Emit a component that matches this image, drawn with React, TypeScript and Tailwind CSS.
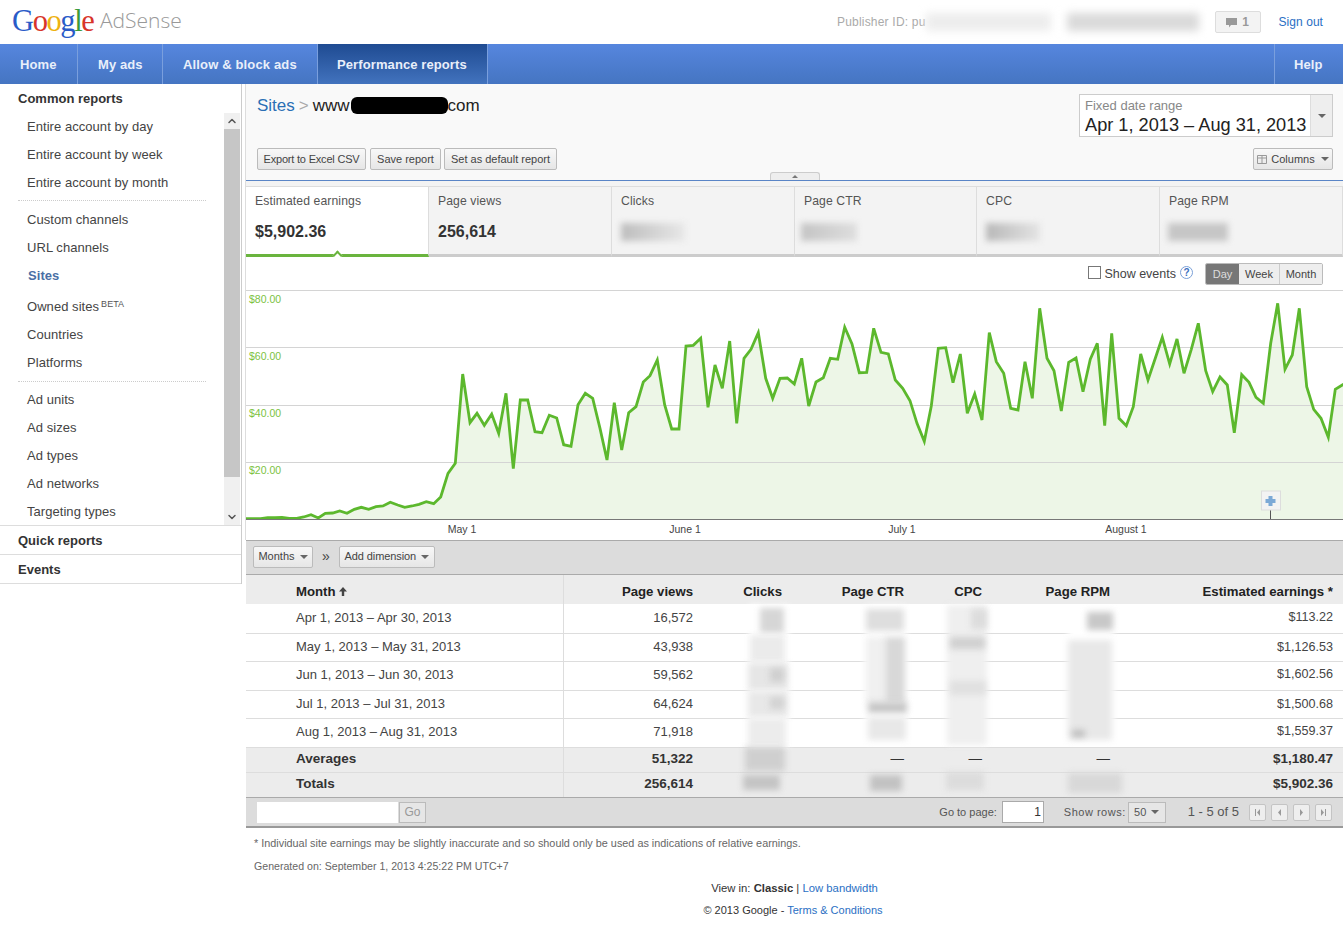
import { ChevronUp, ChevronDown } from "lucide-react";

const zoomA = [[0,716],[22,716],[44,716],[65,713],[87,713],[108,712],[130,715],[152,715],[173,711],[195,704],[217,714],[238,700],[260,699],[281,693],[303,700],[325,688],[346,682],[368,688],[390,680],[411,678],[433,667],[455,675],[476,682],[498,678],[519,673],[541,665],[563,671],[584,651],[606,580],[628,550],[650,282],[672,428],[693,400],[715,436],[737,402],[758,460],[780,340],[802,566],[823,360],[845,360],[867,455],[888,458],[910,406],[932,414],[953,494],[975,499],[996,374],[1018,340],[1040,355],[1062,445],[1083,540],[1105,368],[1127,510],[1148,398],[1170,380]];
const zoomB = [[10,306],[30,287],[52,240],[74,375],[95,447],[117,447],[138,198],[160,196],[182,175],[204,382],[225,255],[247,325],[269,183],[290,430],[312,235],[333,208],[355,158],[377,295],[398,355],[420,295],[442,294],[463,312],[485,235],[506,378],[528,306],[550,293],[571,235],[593,238],[614,142],[636,192],[658,278],[680,277],[701,145],[723,217],[745,222],[766,300],[788,325],[810,362],[831,430],[853,484],[874,378],[895,205],[917,203],[939,308],[961,222],[982,400],[1004,342],[1026,420],[1048,158]];
const zoomC = [[19,245],[41,280],[62,385],[84,390],[105,245],[127,355],[149,85],[171,235],[192,272],[214,393],[236,247],[258,234],[279,335],[301,238],[322,190],[344,437],[365,160],[387,415],[409,437],[430,380],[452,222],[474,300],[496,235],[517,172],[539,252],[561,177],[582,280],[604,208],[625,130],[647,272],[668,335],[690,291],[712,315],[733,458],[755,284],[777,307],[798,352],[820,370],[842,190],[863,70],[885,268],[907,225],[928,85],[950,320],[971,388],[993,415],[1015,472],[1036,328],[1058,314],[1062,312]];

const toPts = (arr: number[][], x0: number) =>
  arr.map(([x, y]) => `${(x0 + x / 3).toFixed(1)},${(280 + y / 3).toFixed(1)}`).join(" ");
const line = `${toPts(zoomA, 246)} ${toPts(zoomB, 640)} ${toPts(zoomC, 990)}`;

const font = "font-['Liberation_Sans',Arial,sans-serif]";

function Caret({ className = "border-t-[#666]" }: { className?: string }) {
  return <span className={`inline-block w-0 h-0 border-x-[4px] border-t-[4px] border-x-transparent ${className}`} />;
}

function Btn({ children, className = "" }: { children: React.ReactNode; className?: string }) {
  return (
    <div className={`h-[22px] flex items-center justify-center rounded-[2px] border border-[#bbb] bg-gradient-to-b from-[#f8f8f8] to-[#e6e6e6] text-[11px] text-[#444] ${className}`}>
      {children}
    </div>
  );
}

function SideItem({ label, active, beta }: { label: string; active?: boolean; beta?: boolean }) {
  return (
    <div className={`h-[28px] flex items-center text-[13px] tracking-[0.05px] ${active ? "font-bold text-[#4a6fa5] pl-[28px]" : "text-[#444] pl-[27px]"}`}>
      {label}
      {beta && <sup className="text-[9px] text-[#555] ml-[2px] top-[-3px]">BETA</sup>}
    </div>
  );
}

function Sidebar() {
  return (
    <div className="w-[242px] shrink-0 border-r border-[#ccc] h-[500px] flex flex-col">
      <div className="h-[29px] flex items-center pl-[18px] text-[13px] font-bold text-[#333]">Common reports</div>
      <div className="h-[412px] flex">
        <div className="flex-1 overflow-hidden">
          <SideItem label="Entire account by day" />
          <SideItem label="Entire account by week" />
          <SideItem label="Entire account by month" />
          <div className="h-[4px] mx-[18px] border-b border-dotted border-[#ccc] mb-[5px]" />
          <SideItem label="Custom channels" />
          <SideItem label="URL channels" />
          <SideItem label="Sites" active />
          <div className="h-[3px]" />
          <SideItem label="Owned sites" beta />
          <SideItem label="Countries" />
          <SideItem label="Platforms" />
          <div className="h-[5px] mx-[18px] border-b border-dotted border-[#ccc] mb-[4px]" />
          <SideItem label="Ad units" />
          <SideItem label="Ad sizes" />
          <SideItem label="Ad types" />
          <SideItem label="Ad networks" />
          <SideItem label="Targeting types" />
        </div>
        <div className="w-[16px] mr-[1px] bg-[#f0f0f0] flex flex-col">
          <div className="h-[16px] flex items-center justify-center"><ChevronUp size={12} strokeWidth={3} className="text-[#555]" /></div>
          <div className="h-[348px] bg-[#c6c6c6]" />
          <div className="flex-1 flex items-end justify-center pb-[2px]"><ChevronDown size={12} strokeWidth={3} className="text-[#555]" /></div>
        </div>
      </div>
      <div className="h-[29px] flex items-center pl-[18px] pt-[1px] text-[13px] font-bold text-[#333] border-t border-[#ddd]">Quick reports</div>
      <div className="h-[30px] flex items-center pl-[18px] pt-[1px] text-[13px] font-bold text-[#333] border-y border-[#ddd]">Events</div>
    </div>
  );
}

function Metric({ label, value, active, blur, width = "w-[183px]" }: { label: string; value?: string; active?: boolean; blur?: string; width?: string }) {
  return (
    <div className={`${width} h-[70px] pl-[9px] pt-[6px] border-r border-[#ddd] relative ${active ? "bg-white border-b-[3px] border-b-[#6ab43e]" : "bg-[#f3f3f3] border-b-[3px] border-b-[#ccc]"}`}>
      <div className="text-[12.2px] tracking-[0.1px] text-[#555] leading-[16px]">{label}</div>
      {value ? (
        <div className="mt-[13px] text-[16px] font-bold text-[#333] leading-[20px]">{value}</div>
      ) : (
        <div className={`mt-[14px] h-[18px] blur-[3px] ${blur}`} />
      )}
      {active && (
        <span className="absolute left-[88px] bottom-[-5px] w-[7px] h-[7px] rotate-45 bg-white border-l-[2px] border-t-[2px] border-[#6ab43e]" />
      )}
    </div>
  );
}

function Chart() {
  const grid = [290.5, 347.5, 405.5, 462.5];
  const labels: [string, number][] = [["$80.00", 302.5], ["$60.00", 359.5], ["$40.00", 416.5], ["$20.00", 473.5]];
  const months: [string, number][] = [["May 1", 462], ["June 1", 685], ["July 1", 902], ["August 1", 1126]];
  return (
    <svg viewBox="246 290 1097 250" className="block w-[1097px] h-[250px]">
      <polygon points={`246,519 ${line} 1343,519`} fill="#edf6e7" />
      {grid.map((y) => (
        <line key={y} x1="246" x2="1343" y1={y} y2={y} stroke="#d4d4d4" />
      ))}
      {labels.map(([t, y]) => (
        <text key={t} x="249" y={y} fontSize="10.5" fill="#7cc242" fontFamily="Liberation Sans">{t}</text>
      ))}
      <polyline points={line} fill="none" stroke="#5cb82d" strokeWidth="2.8" strokeLinejoin="miter" />
      <line x1="246" x2="1343" y1="519.5" y2="519.5" stroke="#777" />
      {months.map(([m, x]) => (
        <text key={m} x={x} y="533" fontSize="10.5" fill="#444" textAnchor="middle" fontFamily="Liberation Sans">{m}</text>
      ))}
      <line x1="1270.5" x2="1270.5" y1="509" y2="519" stroke="#555" />
      <rect x="1261.5" y="491" width="19" height="19" fill="#f3f3f3" stroke="#ddd" />
      <path d="M1268.5 496h4v3h3v4h-3v3h-4v-3h-3v-4h3z" fill="#7ca9d6" />
    </svg>
  );
}

const rows = [
  ["Apr 1, 2013 – Apr 30, 2013", "16,572", "$113.22", "h-[29px] [&>td]:pb-[2px]"],
  ["May 1, 2013 – May 31, 2013", "43,938", "$1,126.53", "h-[28px]"],
  ["Jun 1, 2013 – Jun 30, 2013", "59,562", "$1,602.56", "h-[29px] [&>td]:pb-[2px]"],
  ["Jul 1, 2013 – Jul 31, 2013", "64,624", "$1,500.68", "h-[28px]"],
  ["Aug 1, 2013 – Aug 31, 2013", "71,918", "$1,559.37", "h-[29px] [&>td]:pb-[2px]"],
];

// smudges over the hidden figures, relative to the table's top left
const smudges = [
  // clicks
  "left-[503px] top-[30px] w-[40px] h-[142px] bg-white",
  "left-[514px] top-[33px] w-[24px] h-[25px] bg-[#d6d6d6]",
  "left-[504px] top-[60px] w-[35px] h-[27px] bg-[#ebebeb]",
  "left-[502px] top-[88px] w-[40px] h-[27px] bg-[#e6e6e6]",
  "left-[524px] top-[93px] w-[14px] h-[14px] bg-[#cfcfcf]",
  "left-[502px] top-[116px] w-[40px] h-[26px] bg-[#e8e8e8]",
  "left-[524px] top-[122px] w-[14px] h-[12px] bg-[#d2d2d2]",
  "left-[502px] top-[143px] w-[38px] h-[28px] bg-[#ececec]",
  "left-[499px] top-[172px] w-[40px] h-[24px] bg-[#cfcfcf]",
  "left-[497px] top-[200px] w-[37px] h-[15px] bg-[#c4c4c4]",
  // page ctr
  "left-[619px] top-[31px] w-[42px] h-[136px] bg-white",
  "left-[620px] top-[34px] w-[38px] h-[22px] bg-[#dedede]",
  "left-[620px] top-[62px] w-[20px] h-[66px] bg-[#f0f0f0]",
  "left-[639px] top-[62px] w-[20px] h-[66px] bg-[#d8d8d8]",
  "left-[622px] top-[127px] w-[39px] h-[11px] bg-[#c6c6c6]",
  "left-[622px] top-[142px] w-[38px] h-[23px] bg-[#e8e8e8]",
  "left-[624px] top-[200px] w-[32px] h-[16px] bg-[#c2c2c2]",
  // cpc
  "left-[701px] top-[30px] w-[40px] h-[140px] bg-[#efefef]",
  "left-[725px] top-[34px] w-[16px] h-[20px] bg-[#dcdcdc]",
  "left-[704px] top-[62px] w-[35px] h-[12px] bg-[#d0d0d0]",
  "left-[704px] top-[106px] w-[36px] h-[14px] bg-[#e0e0e0]",
  "left-[700px] top-[197px] w-[38px] h-[18px] bg-[#dcdcdc]",
  // page rpm
  "left-[822px] top-[35px] w-[46px] h-[132px] bg-white",
  "left-[841px] top-[37px] w-[26px] h-[18px] bg-[#c8c8c8]",
  "left-[822px] top-[65px] w-[44px] h-[100px] bg-[#e8e8e8]",
  "left-[826px] top-[155px] w-[13px] h-[7px] bg-[#bcbcbc]",
  "left-[822px] top-[198px] w-[54px] h-[20px] bg-[#d8d8d8]",
];

function DataTable() {
  return (
    <div className="relative">
      <table className="w-[1097px] table-fixed border-collapse text-[13px] text-[#444]">
        <colgroup>
          <col className="w-[317px]" /><col className="w-[140px]" /><col className="w-[89px]" /><col className="w-[122px]" /><col className="w-[78px]" /><col className="w-[128px]" /><col className="w-[223px]" />
        </colgroup>
        <thead>
          <tr className="h-[29px] bg-[#ececec] text-[13.2px] text-[#222] text-right">
            <th className="pl-[50px] pt-[4px] text-left border-r border-[#ddd]">
              <span className="inline-flex items-center gap-[3px]">
                Month
                <svg width="8" height="9" viewBox="0 0 8 9"><path d="M4 0l4 4.500H5.200V9H2.800V4.500H0z" fill="#444" /></svg>
              </span>
            </th>
            <th className="pr-[10px] pt-[4px]">Page views</th>
            <th className="pr-[10px] pt-[4px]">Clicks</th>
            <th className="pr-[10px] pt-[4px]">Page CTR</th>
            <th className="pr-[10px] pt-[4px]">CPC</th>
            <th className="pr-[10px] pt-[4px]">Page RPM</th>
            <th className="pr-[10px] pt-[4px]">Estimated earnings *</th>
          </tr>
        </thead>
        <tbody>
          {rows.map(([m, v, e, h]) => (
            <tr key={m} className={`${h} border-b border-[#ddd] text-right`}>
              <td className="pl-[50px] text-left border-r border-[#ddd]">{m}</td>
              <td className="pr-[10px]">{v}</td>
              <td /><td /><td /><td />
              <td className="pr-[10px] text-[12.6px]">{e}</td>
            </tr>
          ))}
          <tr className="h-[25px] bg-[#ececec] border-b border-[#ddd] text-[13.5px] font-bold text-right text-[#333]">
            <td className="pl-[50px] text-left border-r border-[#ddd]">Averages</td>
            <td className="pr-[10px]">51,322</td>
            <td />
            <td className="pr-[10px] font-normal">—</td>
            <td className="pr-[10px] font-normal">—</td>
            <td className="pr-[10px] font-normal">—</td>
            <td className="pr-[10px]">$1,180.47</td>
          </tr>
          <tr className="h-[25px] bg-[#ececec] text-[13.5px] font-bold text-right text-[#333]">
            <td className="pl-[50px] pb-[1px] text-left border-r border-[#ddd]">Totals</td>
            <td className="pr-[10px] pb-[1px]">256,614</td>
            <td /><td /><td /><td />
            <td className="pr-[10px] pb-[1px]">$5,902.36</td>
          </tr>
        </tbody>
      </table>
      {smudges.map((s) => (
        <div key={s} className={`absolute blur-[3px] ${s}`} />
      ))}
    </div>
  );
}

function PagerBtn({ d }: { d: string }) {
  return (
    <div className="w-[17px] h-[17px] flex items-center justify-center rounded-[2px] border border-[#c4c4c4] bg-[#eee]">
      <svg width="9" height="9" viewBox="0 0 9 9"><path d={d} fill="#999" /></svg>
    </div>
  );
}

export default function App() {
  return (
    <div className={`${font} w-full h-[942px] bg-white overflow-hidden`}>
      <header className="h-[44px] flex items-center">
        <div className="pl-[12px] w-[100px] text-[30.5px] leading-none font-['Liberation_Serif',serif] tracking-[-1.4px] -mt-[2px]">
          <span className="text-[#2a5bc8]">G</span><span className="text-[#d8352a]">o</span><span className="text-[#eeb211]">o</span><span className="text-[#2a5bc8]">g</span><span className="text-[#3b9b3a]">l</span><span className="text-[#d8352a]">e</span>
        </div>
        <div className="text-[21px] font-['Open_Sans',sans-serif] font-light text-[#999] -mt-[3px]">AdSense</div>
        <div className="ml-auto flex items-center text-[12px] text-[#aaa]">
          <span className="tracking-[0.2px]">Publisher ID: pu</span>
          <span className="w-[125px] h-[18px] bg-[#ededed] blur-[4px]" />
          <span className="ml-[16px] w-[132px] h-[18px] bg-[#dadada] blur-[4px]" />
          <div className="ml-[16px] w-[46px] h-[22px] flex items-center justify-center gap-[5px] border border-[#ddd] bg-[#f3f3f3] rounded-[2px] text-[#999] font-bold">
            <svg width="11" height="11" viewBox="0 0 11 11"><path d="M0 1h11v7H5L3 10.500V8H0z" fill="#999" /></svg>1
          </div>
          <span className="ml-[18px] mr-[20px] tracking-[0.05px] text-[#2a6fc4]">Sign out</span>
        </div>
      </header>

      <nav className="h-[40px] flex bg-gradient-to-b from-[#5686de] to-[#4575c2] text-[13px] font-bold tracking-[0.1px] text-[#e9effa]">
        <div className="w-[78px] pl-[20px] pt-[1px] flex items-center border-r border-[#7a9fdd]">Home</div>
        <div className="w-[85px] pl-[20px] pt-[1px] flex items-center border-r border-[#7a9fdd]">My ads</div>
        <div className="w-[154px] pl-[20px] pt-[1px] flex items-center tracking-[0.15px]">Allow &amp; block ads</div>
        <div className="w-[171px] pl-[19px] pt-[1px] flex items-center bg-gradient-to-b from-[#1f4b92] to-[#4273be] border-x border-[#7a9fdd]">Performance reports</div>
        <div className="ml-auto w-[69px] pl-[19px] pt-[1px] flex items-center border-l border-[#7a9fdd]">Help</div>
      </nav>

      <div className="flex">
        <Sidebar />
        <main className="w-[1097px] ml-[4px]">
          <div className="w-[1098px] -ml-[1px] border-l border-[#ddd]">
            <section className="h-[97px] bg-[#f9f9f9] border-b border-[#5a85c6] relative">
              <div className="flex justify-between pl-[11px] pr-[10px] pt-[10px]">
                <div className="text-[17px] leading-[22px] pt-[1px] text-[#222] flex items-center h-[22px]">
                  <span className="text-[#2a6fb5]">Sites</span>
                  <span className="text-[#aaa] mx-[4px]">&gt;</span>
                  <span>www</span>
                  <span className="ml-[1px] w-[97px] h-[17px] rounded-[6px] bg-black" />
                  <span>com</span>
                </div>
                <div className="w-[254px] h-[43px] flex border border-[#ccc] bg-white">
                  <div className="flex-1 pl-[5px] pt-[2px]">
                    <div className="text-[13px] leading-[17px] text-[#888]">Fixed date range</div>
                    <div className="text-[18.2px] leading-[22px] text-[#222] whitespace-nowrap">Apr 1, 2013 – Aug 31, 2013</div>
                  </div>
                  <div className="w-[22px] bg-[#eee] border-l border-[#ddd] flex items-center justify-center"><Caret /></div>
                </div>
              </div>
              <div className="flex pl-[11px] pr-[10px] mt-[11px] gap-[3px]">
                <Btn className="w-[109px] tracking-[-0.2px]">Export to Excel CSV</Btn>
                <Btn className="w-[71px] ml-[1px]">Save report</Btn>
                <Btn className="w-[113px]">Set as default report</Btn>
                <Btn className="w-[80px] ml-auto gap-[4px]">
                  <svg width="10" height="9" viewBox="0 0 10 9" fill="none" stroke="#999"><path d="M.5.5h9v8h-9zM.5 3h9M5 .5v8" /></svg>
                  Columns <Caret className="border-t-[#666] ml-[2px]" />
                </Btn>
              </div>
              <div className="absolute left-[524px] bottom-0 w-[50px] h-[8px] bg-[#eee] border border-b-0 border-[#ccc] rounded-t-[3px] flex items-center justify-center">
                <span className="w-0 h-0 border-x-[3px] border-b-[3px] border-x-transparent border-b-[#777]" />
              </div>
            </section>
            <div className="h-[6px] bg-[#f3f3f3] border-b border-[#ddd]" />
            <div className="flex w-[1097px]">
              <Metric label="Estimated earnings" value="$5,902.36" active />
              <Metric label="Page views" value="256,614" />
              <Metric label="Clicks" blur="w-[64px] bg-gradient-to-r from-[#bdbdbd] to-[#e8e8e8]" />
              <Metric label="Page CTR" width="w-[182px]" blur="-ml-[3px] w-[56px] bg-gradient-to-r from-[#c4c4c4] to-[#dedede]" />
              <Metric label="CPC" blur="w-[54px] bg-gradient-to-r from-[#b8b8b8] to-[#e4e4e4]" />
              <Metric label="Page RPM" blur="-ml-[1px] w-[60px] bg-[#c6c6c6]" />
            </div>
            <div className="h-[33px] flex items-center justify-end pr-[20px] text-[12.5px] text-[#444]">
              <span className="w-[13px] h-[13px] border border-[#777] bg-white mr-[3px] -mt-[2px]" />
              <span className="pt-[2px]">Show events</span>
              <span className="ml-[4px] -mt-[3px] w-[13px] h-[13px] rounded-full border border-[#7aa0d8] text-[#3a6fc0] text-[10px] font-bold flex items-center justify-center">?</span>
              <div className="ml-[12px] mt-[1px] flex h-[22px] text-[11px] rounded-[2px] border border-[#bbb] overflow-hidden">
                <div className="w-[33px] bg-[#777] text-[#ddd] flex items-center justify-center">Day</div>
                <div className="w-[41px] bg-[#eee] border-r border-[#ccc] flex items-center justify-center">Week</div>
                <div className="w-[42px] bg-[#eee] flex items-center justify-center">Month</div>
              </div>
            </div>
            <Chart />
          </div>
          <div className="h-[35px] bg-[#dcdcdc] border-y border-[#aaa] flex items-center pl-[7px] pb-[2px] text-[11px] text-[#444]">
            <Btn className="w-[60px] gap-[5px]">Months <Caret /></Btn>
            <span className="mx-[9px] text-[14px]">»</span>
            <Btn className="w-[96px] gap-[5px] tracking-[-0.1px]">Add dimension <Caret /></Btn>
          </div>
          <DataTable />
          <div className="h-[31px] bg-[#dcdcdc] border-t border-[#aaa] border-b-[2px] border-b-[#999] flex items-center pl-[11px] pr-[11px] text-[11px] text-[#555]">
            <div className="w-[141px] h-[21px] bg-white" />
            <div className="ml-[1px] w-[27px] h-[21px] border border-[#bbb] bg-[#e6e6e6] flex items-center justify-center text-[#999] text-[12px]">Go</div>
            <div className="ml-auto">Go to page:</div>
            <div className="ml-[5px] w-[42px] h-[22px] bg-white border border-[#aaa] flex items-center justify-end pr-[2px] text-[12px] text-[#333]">1</div>
            <div className="ml-[20px] tracking-[0.5px]">Show rows:</div>
            <div className="ml-[2px] w-[38px] h-[21px] border border-[#bbb] bg-[#e6e6e6] flex items-center justify-center gap-[5px]">50 <Caret /></div>
            <div className="ml-[22px] text-[13px]">1 - 5 of 5</div>
            <div className="ml-[10px] flex gap-[5px]">
              <PagerBtn d="M2 1h1v7H2zM7 1v7L4 4.500z" />
              <PagerBtn d="M6 1v7L3 4.500z" />
              <PagerBtn d="M3 1v7l3-3.500z" />
              <PagerBtn d="M2 1v7l3-3.500zM6 1h1v7H6z" />
            </div>
          </div>
          <div className="pl-[8px] pt-[8px] text-[10.6px] text-[#666] leading-[14px]">
            <div className="text-[10.85px]">* Individual site earnings may be slightly inaccurate and so should only be used as indications of relative earnings.</div>
            <div className="mt-[9px]">Generated on: September 1, 2013 4:25:22 PM UTC+7</div>
          </div>
          <div className="mt-[8px] text-center text-[#333] leading-[14px]">
            <div className="text-[11.3px]">View in: <b>Classic</b> | <span className="text-[#2a6fc4]">Low bandwidth</span></div>
            <div className="mt-[8px] text-[11px] pr-[3px]">© 2013 Google - <span className="text-[#2a6fc4]">Terms &amp; Conditions</span></div>
          </div>
        </main>
      </div>
    </div>
  );
}
